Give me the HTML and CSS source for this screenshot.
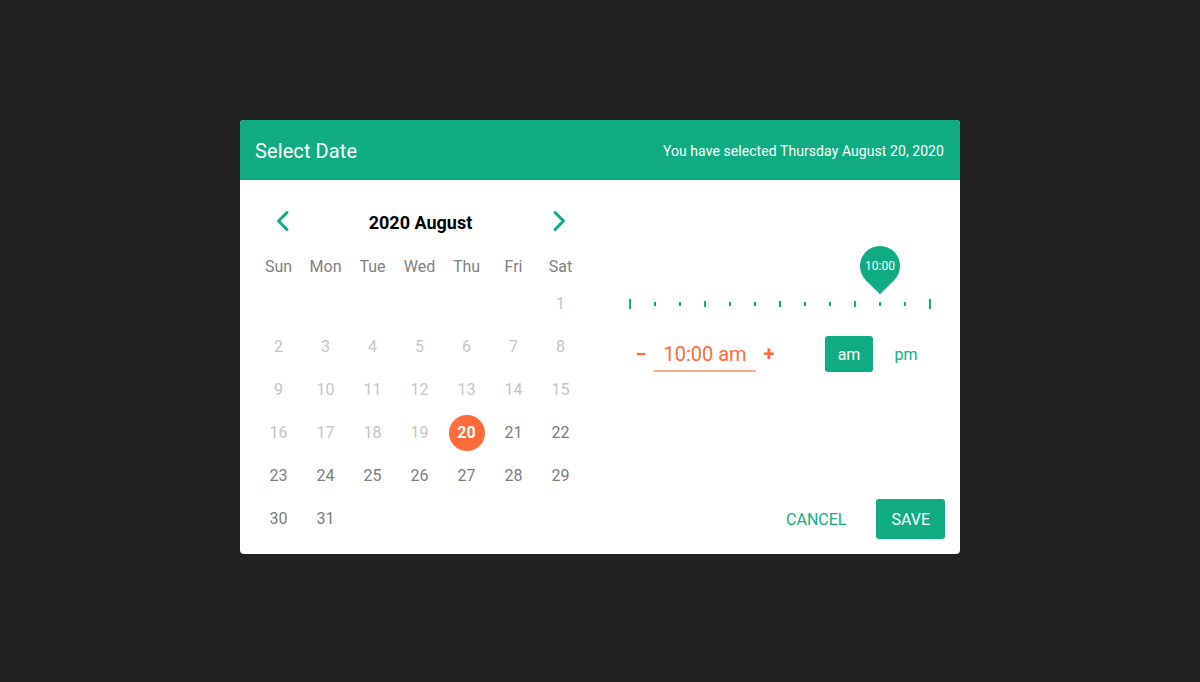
FILE: index.html
```html
<!DOCTYPE html>
<html lang="en">
<head>
<meta charset="utf-8">
<title>Select Date</title>
<link rel="stylesheet" href="styles.css">
</head>
<body>
<div class="dialog">
  <header class="dialog-header">
    <h1 class="dialog-title">Select Date</h1>
    <p class="dialog-summary">You have selected Thursday August 20, 2020</p>
  </header>
  <div class="dialog-body">
    <section class="calendar">
      <div class="cal-nav">
        <button class="nav-btn" aria-label="Previous month">
          <svg width="24" height="24" viewBox="0 0 24 24"><polyline points="16,3.5 7.5,12 16,20.5" /></svg>
        </button>
        <div class="cal-title">2020 August</div>
        <button class="nav-btn" aria-label="Next month">
          <svg width="24" height="24" viewBox="0 0 24 24"><polyline points="8,3.5 16.5,12 8,20.5" /></svg>
        </button>
      </div>
      <div class="weekdays">
        <span>Sun</span><span>Mon</span><span>Tue</span><span>Wed</span><span>Thu</span><span>Fri</span><span>Sat</span>
      </div>
      <div class="dates">
        <span class="day"></span><span class="day"></span><span class="day"></span><span class="day"></span><span class="day"></span><span class="day"></span>
        <span class="day off">1</span>
        <span class="day off">2</span><span class="day off">3</span><span class="day off">4</span><span class="day off">5</span><span class="day off">6</span><span class="day off">7</span><span class="day off">8</span>
        <span class="day off">9</span><span class="day off">10</span><span class="day off">11</span><span class="day off">12</span><span class="day off">13</span><span class="day off">14</span><span class="day off">15</span>
        <span class="day off">16</span><span class="day off">17</span><span class="day off">18</span><span class="day off">19</span><span class="day"><span class="selected">20</span></span><span class="day">21</span><span class="day">22</span>
        <span class="day">23</span><span class="day">24</span><span class="day">25</span><span class="day">26</span><span class="day">27</span><span class="day">28</span><span class="day">29</span>
        <span class="day">30</span><span class="day">31</span>
      </div>
    </section>
    <section class="time-panel">
      <div class="slider">
        <div class="thumb-label"><span>10:00</span></div>
        <div class="ticks">
          <i class="tick big"></i><i class="tick"></i><i class="tick"></i><i class="tick mid"></i><i class="tick"></i><i class="tick"></i><i class="tick mid"></i><i class="tick"></i><i class="tick"></i><i class="tick mid"></i><i class="tick"></i><i class="tick"></i><i class="tick big"></i>
        </div>
      </div>
      <div class="time-row">
        <button class="step">&minus;</button>
        <div class="time-field">10:00 am</div>
        <button class="step">+</button>
        <button class="ampm active">am</button>
        <button class="ampm">pm</button>
      </div>
      <div class="actions">
        <button class="btn-text">CANCEL</button>
        <button class="btn-primary">SAVE</button>
      </div>
    </section>
  </div>
</div>
</body>
</html>
```

FILE: styles.css
```css
* { box-sizing: border-box; }

body {
  margin: 0;
  background: #222222;
  font-family: Roboto, "Liberation Sans", Arial, sans-serif;
  height: 682px;
}

button {
  font-family: inherit;
  border: 0;
  background: none;
  padding: 0;
  margin: 0;
  cursor: pointer;
}

.dialog {
  width: 720px;
  margin: 120px auto 0;
  background: #ffffff;
  border-radius: 4px;
  overflow: hidden;
}

.dialog-header {
  height: 60px;
  background: #0fac84;
  color: #ffffff;
  display: flex;
  align-items: center;
  justify-content: space-between;
  padding: 2px 16px 0 15px;
}

.dialog-title {
  margin: 0;
  font-size: 20px;
  font-weight: 400;
  letter-spacing: 0.1px;
}

.dialog-summary {
  margin: 0;
  font-size: 14px;
  letter-spacing: 0.07px;
}

.dialog-body {
  display: flex;
  height: 374px;
}

.calendar {
  width: 344px;
  padding: 20px 0 14px 15px;
}

.cal-nav {
  height: 42px;
  display: flex;
  align-items: center;
  justify-content: space-between;
  padding: 0 5.5px 0 7.5px;
}

.nav-btn {
  width: 40px;
  height: 42px;
  display: flex;
  align-items: center;
  justify-content: center;
}

.nav-btn svg polyline {
  fill: none;
  stroke: #0fac84;
  stroke-width: 3;
  stroke-linecap: round;
  stroke-linejoin: round;
}

.cal-title {
  font-size: 18px;
  font-weight: 700;
  color: #000000;
  padding-top: 2px;
}

.weekdays {
  margin-top: 6px;
  display: grid;
  grid-template-columns: repeat(7, 47px);
  height: 34px;
  align-items: center;
  justify-items: center;
  font-size: 16px;
  color: #7f7f7f;
  padding-top: 2px;
}

.dates {
  display: grid;
  grid-template-columns: repeat(7, 47px);
  grid-auto-rows: 43px;
}

.day {
  display: flex;
  align-items: center;
  justify-content: center;
  font-size: 16px;
  color: #7c7c7c;
}

.day.off {
  color: #c4c4c4;
}

.selected {
  width: 36px;
  height: 36px;
  border-radius: 50%;
  background: #ff6b3b;
  color: #ffffff;
  font-weight: 700;
  display: flex;
  align-items: center;
  justify-content: center;
}

.time-panel {
  flex: 1;
  display: flex;
  flex-direction: column;
  padding: 66px 0 15px 45px;
}

.slider {
  position: relative;
  width: 302px;
  height: 63px;
  display: flex;
  align-items: flex-end;
}

.thumb-label {
  position: absolute;
  top: 0;
  left: 231px;
  width: 40px;
  height: 40px;
  background: #0fac84;
  border-radius: 50% 50% 0 50%;
  transform: rotate(45deg);
  display: flex;
  align-items: center;
  justify-content: center;
}

.thumb-label span {
  transform: rotate(-45deg);
  color: #ffffff;
  font-size: 12px;
}

.ticks {
  width: 100%;
  height: 10px;
  display: flex;
  align-items: center;
  justify-content: space-between;
}

.tick {
  width: 2px;
  height: 4px;
  background: #0fac84;
}

.tick.mid { height: 6px; }
.tick.big { height: 10px; }

.time-row {
  margin-top: 27px;
  height: 36px;
  display: flex;
  align-items: center;
  padding-left: 2px;
}

.step {
  width: 20px;
  height: 36px;
  color: #ff6b3b;
  font-size: 20px;
  font-weight: 700;
}

.time-field {
  width: 102px;
  margin: 0 3px;
  height: 36px;
  display: flex;
  align-items: center;
  justify-content: center;
  padding-top: 2px;
  font-size: 20px;
  color: #ff6b3b;
  border-bottom: 2px solid #ffab90;
}

.ampm {
  width: 48px;
  height: 36px;
  border-radius: 3px;
  font-size: 16px;
  color: #0fac84;
  font-weight: 400;
}

.ampm.active {
  margin-left: 46px;
  background: #0fac84;
  color: #ffffff;
}

.ampm + .ampm {
  margin-left: 9px;
}

.actions {
  margin-top: auto;
  display: flex;
  justify-content: flex-end;
  gap: 15px;
  padding-right: 15px;
}

.btn-text {
  height: 40px;
  padding: 0 15px;
  font-size: 16px;
  color: #0fac84;
}

.btn-primary {
  height: 40px;
  padding: 0 15px;
  border-radius: 3px;
  background: #0fac84;
  color: #ffffff;
  font-size: 16px;
  font-weight: 400;
}
```
